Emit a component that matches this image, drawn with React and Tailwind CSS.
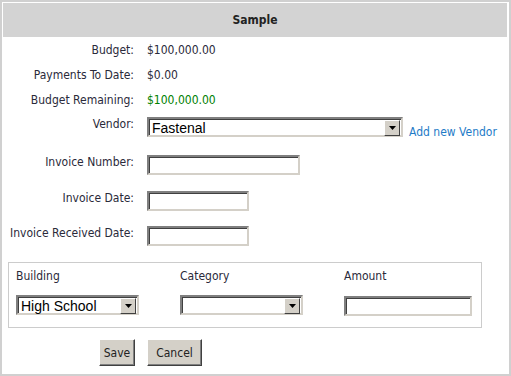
import React from "react";

const font = { fontFamily: '"DejaVu Sans Condensed", "DejaVu Sans", sans-serif' };

function Select({ value, w }) {
  return (
    <div
      className={`relative flex h-[20px] items-center border-2 border-t-[#808080] border-l-[#808080] border-b-[#d4d0c8] border-r-[#d4d0c8] bg-white ${w}`}
      style={{ boxShadow: "inset 1px 1px 0 #404040" }}
    >
      <span className="pl-[3px] pt-[2px] text-[14px] leading-none text-black" style={{ fontFamily: '"Liberation Sans", Arial, sans-serif' }}>
        {value}
      </span>
      <div className="absolute right-[1px] top-[1px] flex h-[16px] w-[16px] items-center justify-center border border-t-white border-l-white border-b-[#404040] border-r-[#404040] bg-[#d4d0c8]">
        <svg width="7" height="4" viewBox="0 0 7 4"><path d="M0 0h7L3.5 4z" fill="#000" /></svg>
      </div>
    </div>
  );
}

function Input({ w }) {
  return (
    <div
      className={`h-[20px] border-2 border-t-[#808080] border-l-[#808080] border-b-[#d4d0c8] border-r-[#d4d0c8] bg-white ${w}`}
      style={{ boxShadow: "inset 1px 1px 0 #404040" }}
    />
  );
}

function Button({ children, w }) {
  return (
    <div className={`flex h-[27px] items-center justify-center border border-t-white border-l-white border-b-[#404040] border-r-[#404040] bg-[#d4d0c8] text-[12px] text-[#222] ${w}`} style={{ boxShadow: "inset -1px -1px 0 #808080" }}>
      {children}
    </div>
  );
}

export default function App() {
  return (
    <div className="h-[376px] w-[511px] border-2 border-[#d0d0d0] bg-white p-px text-[12px] leading-[14px] text-[#2a2a3a]" style={font}>
      <div className="mr-px flex h-[34px] items-center justify-center bg-[#d3d3d3] font-bold text-[#222]">Sample</div>
      <div className="flex flex-col">
        <div className="flex h-[25px] items-center">
          <div className="w-[131px] text-right">Budget:</div>
          <div className="pl-[13px]">$100,000.00</div>
        </div>
        <div className="flex h-[25px] items-center">
          <div className="w-[131px] text-right">Payments To Date:</div>
          <div className="pl-[13px]">$0.00</div>
        </div>
        <div className="flex h-[25px] items-center">
          <div className="w-[131px] text-right">Budget Remaining:</div>
          <div className="pl-[13px] text-[#008000]">$100,000.00</div>
        </div>
        <div className="mt-[5px] flex h-[38px] items-start">
          <div className="w-[131px] text-right">Vendor:</div>
          <div className="ml-[13px]">
            <Select value="Fastenal" w="w-[256px]" />
          </div>
          <a className="ml-[6px] pt-[8px] text-[#1e7bc7]">Add new Vendor</a>
        </div>
        <div className="flex h-[36px] items-start">
          <div className="w-[131px] text-right">Invoice Number:</div>
          <div className="ml-[13px]">
            <Input w="w-[153px]" />
          </div>
        </div>
        <div className="flex h-[35px] items-start">
          <div className="w-[131px] text-right">Invoice Date:</div>
          <div className="ml-[13px]">
            <Input w="w-[102px]" />
          </div>
        </div>
        <div className="flex h-[36px] items-start">
          <div className="w-[131px] text-right">Invoice Received Date:</div>
          <div className="ml-[13px]">
            <Input w="w-[102px]" />
          </div>
        </div>
        <div className="ml-[5px] flex h-[66px] w-[474px] gap-[41px] border border-[#cccccc] px-[7px] pt-[6px]">
          <div className="flex w-[123px] flex-col gap-[12px]">
            <div>Building</div>
            <Select value="High School" w="w-[123px]" />
          </div>
          <div className="flex w-[123px] flex-col gap-[12px]">
            <div>Category</div>
            <Select value="" w="w-[123px]" />
          </div>
          <div className="flex w-[128px] flex-col gap-[13px]">
            <div>Amount</div>
            <Input w="w-[128px]" />
          </div>
        </div>
        <div className="mt-[11px] flex gap-[12px] pl-[96px]">
          <Button w="w-[36px]">Save</Button>
          <Button w="w-[55px]">Cancel</Button>
        </div>
      </div>
    </div>
  );
}
